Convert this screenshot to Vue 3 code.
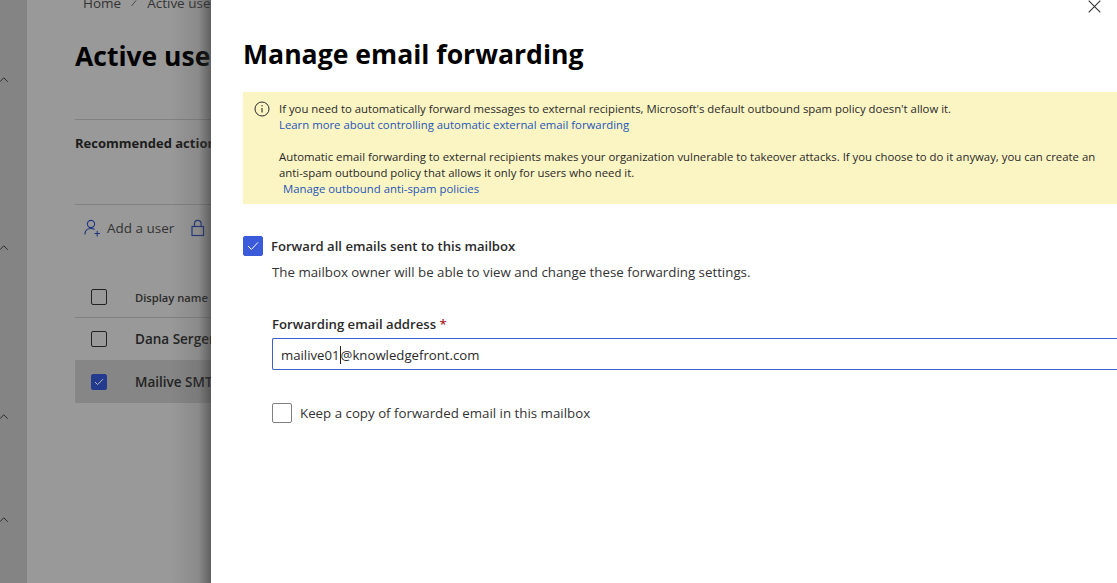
<script setup>
const chevrons = [84, 168, 169, 103]
</script>

<template>
  <div class="page">
    <nav class="nav">
      <svg v-for="(h, i) in chevrons" :key="i" class="chev" :style="{ marginTop: h - 8 + 'px' }" width="10" height="8" viewBox="0 0 10 8"><path d="M.8 5.8 4.8 1.8 8.8 5.8" fill="none" stroke="#2e2e2e" stroke-width="1"/></svg>
    </nav>
    <main class="main">
      <div class="crumbs"><span>Home</span><svg width="8" height="10" viewBox="0 0 8 10"><path d="M1.5 8 6 2.5" fill="none" stroke="#444" stroke-width=".9"/></svg><span>Active users</span></div>
      <h1 class="title">Active users</h1>
      <div class="rec">Recommended actions</div>
      <div class="toolbar">
        <span class="tool">
          <svg width="17" height="18" viewBox="0 0 17 18" fill="none" stroke="#21357f" stroke-width="1.1"><circle cx="7" cy="5" r="3.6"/><path d="M1 15.5c0-3.6 2.4-6 6-6 1.4 0 2.5.3 3.5 1"/><path d="M10.5 14.5h5.5M13.2 12v5.5"/></svg>
          Add a user
        </span>
        <svg class="lock" width="14" height="18" viewBox="0 0 14 18" fill="none" stroke="#21357f" stroke-width="1.2"><rect x="1" y="7.5" width="11.5" height="9"/><path d="M3.5 7.5V4.6a3.3 3.3 0 0 1 6.6 0v2.9"/></svg>
      </div>
      <div class="row head"><span class="box"></span><span class="cell-h">Display name</span></div>
      <div class="row"><span class="box"></span><span class="cell">Dana Sergent</span></div>
      <div class="row sel"><span class="box on"><svg width="10" height="8" viewBox="0 0 10 8"><path d="M1 4l2.6 2.6L9 1.2" fill="none" stroke="#b9b9b9" stroke-width="1"/></svg></span><span class="cell">Mailive SMTP</span></div>
    </main>
    <div class="shade"></div>
    <section class="panel">
      <button class="close" aria-label="Close"><svg width="13" height="13" viewBox="0 0 13 13"><path d="M.7.7 12.3 12.3M12.3.7.7 12.3" stroke="#333" stroke-width="1.1" fill="none"/></svg></button>
      <h2 class="ptitle">Manage email forwarding</h2>
      <div class="notice">
        <svg class="info" width="16" height="16" viewBox="0 0 16 16" fill="none" stroke="#2b2b2b"><circle cx="8" cy="8" r="7"/><path d="M8 7v4.4" stroke-width="1.1"/><circle cx="8" cy="4.8" r=".7" fill="#2b2b2b" stroke="none"/></svg>
        <div class="ntext">
          <div>If you need to automatically forward messages to external recipients, Microsoft's default outbound spam policy doesn't allow it.</div>
          <a>Learn more about controlling automatic external email forwarding</a>
          <div class="gap">Automatic email forwarding to external recipients makes your organization vulnerable to takeover attacks. If you choose to do it anyway, you can create an anti-spam outbound policy that allows it only for users who need it.</div>
          <a class="ind">Manage outbound anti-spam policies</a>
        </div>
      </div>
      <div class="fwd">
        <span class="cb on"><svg width="12" height="10" viewBox="0 0 12 10"><path d="M1 5l3.4 3.4L11 1.4" fill="none" stroke="#fff" stroke-width="1"/></svg></span>
        <span class="fwd-l">Forward all emails sent to this mailbox</span>
      </div>
      <div class="sub">
        <p class="desc">The mailbox owner will be able to view and change these forwarding settings.</p>
        <label class="flabel">Forwarding email address <span class="req">*</span></label>
        <div class="input">mailive01<i class="caret"></i>@knowledgefront.com</div>
        <div class="keep"><span class="cb"></span><span>Keep a copy of forwarded email in this mailbox</span></div>
      </div>
    </section>
  </div>
</template>

<style scoped>
.page { position: relative; width: 1117px; height: 583px; overflow: hidden; display: flex; background: #999; font-family: "Open Sans", "Noto Sans", sans-serif; color: #242424; }
.nav { width: 27px; flex: none; background: #848484; display: flex; flex-direction: column; box-sizing: border-box; }
.chev { display: block; margin-left: -1px; flex: none; }
.main { flex: 1; padding-left: 48px; min-width: 0; }
.crumbs { display: flex; align-items: center; gap: 9px; height: 14px; margin-top: -4px; padding-left: 8px; font-size: 13.5px; line-height: 14px; color: #333; white-space: nowrap; }
.title { margin: 27px 0 0; font-size: 26.5px; line-height: 38px; font-weight: 700; color: #000; white-space: nowrap; }
.rec { margin-top: 44px; padding-top: 11px; border-top: 1px solid #818181; height: 73px; box-sizing: content-box; font-size: 13px; line-height: 24px; font-weight: 700; color: #1c1c1c; white-space: nowrap; }
.toolbar { border-top: 1px solid #818181; height: 71px; display: flex; align-items: flex-start; padding: 9px 0 0 9px; box-sizing: border-box; white-space: nowrap; }
.tool { display: flex; align-items: center; gap: 6px; font-size: 13.5px; line-height: 28px; color: #333; }
.lock { margin: 5px 0 0 17px; }
.row { height: 42px; display: flex; align-items: center; padding-left: 16px; white-space: nowrap; }
.head { height: 40px; margin-top: 2px; border-bottom: 1px solid #818181; }
.sel { height: 43px; background: #868686; }
.box { width: 16px; height: 16px; border: 1px solid #222; border-radius: 2px; box-sizing: border-box; flex: none; margin-right: 28px; display: flex; align-items: center; justify-content: center; }
.box.on { background: #233a8f; border-color: #233a8f; }
.cell-h { font-size: 11.2px; font-weight: 600; color: #2a2a2a; }
.cell { font-size: 13.5px; font-weight: 600; color: #222; }
.shade { position: absolute; top: 0; bottom: 0; left: 170px; width: 41px; background: linear-gradient(to right, rgba(70,70,70,0), rgba(70,70,70,.18) 70%, rgba(50,50,50,.55)); }
.panel { position: absolute; top: 0; right: 0; bottom: 0; left: 211px; background: #fff; padding: 0 0 0 32px; overflow: hidden; }
.close { position: absolute; top: 0; right: 16px; border: 0; background: none; padding: 0; height: 13px; display: block; }
.ptitle { margin: 37px 0 0; font-size: 26.6px; line-height: 34px; font-weight: 700; color: #000; white-space: nowrap; }
.notice { margin-top: 21px; height: 112px; background: #fbf4c3; display: flex; padding: 9px 0 0 11px; box-sizing: border-box; }
.info { flex: none; margin: 0 9px 0 0; }
.ntext { font-size: 11.35px; line-height: 16px; color: #2a2a2a; width: 830px; flex: none; }
.ntext a { color: #1f57b8; display: block; }
.gap { margin-top: 16px; }
.ind { padding-left: 4px; }
.fwd { margin-top: 32px; display: flex; align-items: center; gap: 8px; height: 20px; }
.cb { width: 20px; height: 20px; border: 1px solid #7f7f7f; border-radius: 2px; box-sizing: border-box; display: flex; align-items: center; justify-content: center; flex: none; background: #fff; }
.cb.on { background: #3b5bdb; border-color: #3b5bdb; }
.fwd-l { font-size: 13.1px; font-weight: 600; color: #2a2a2a; white-space: nowrap; }
.sub { padding-left: 29px; }
.desc { margin: 7px 0 0; font-size: 13.3px; line-height: 18px; color: #333; white-space: nowrap; }
.flabel { display: block; margin-top: 34px; font-size: 13.15px; line-height: 18px; font-weight: 600; color: #2a2a2a; }
.req { color: #a4262c; }
.input { margin-top: 5px; height: 32px; border: 1px solid #3b5fd0; border-right: 0; border-radius: 2px 0 0 2px; box-sizing: border-box; padding-left: 8px; font-size: 13.2px; line-height: 32px; color: #2a2a2a; white-space: nowrap; }
.caret { display: inline-block; width: 1px; height: 18px; background: #222; vertical-align: -4px; }
.keep { margin-top: 33px; display: flex; align-items: center; gap: 8px; font-size: 13.3px; color: #333; white-space: nowrap; }
</style>
